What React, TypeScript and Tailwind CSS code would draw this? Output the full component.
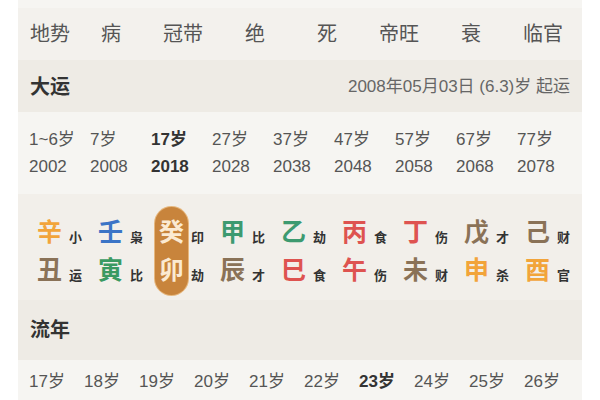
const font = { fontFamily: '"Liberation Sans", "Noto Sans CJK SC", sans-serif' };

const dishi = ["病", "冠带", "绝", "死", "帝旺", "衰", "临官"];

const dayun = [
  ["1~6岁", "2002"],
  ["7岁", "2008"],
  ["17岁", "2018"],
  ["27岁", "2028"],
  ["37岁", "2038"],
  ["47岁", "2048"],
  ["57岁", "2058"],
  ["67岁", "2068"],
  ["77岁", "2078"],
];

type Pillar = {
  gan: string;
  ganColor: string;
  ganTag: string;
  zhi: string;
  zhiColor: string;
  zhiTag: string;
  active?: boolean;
};

const pillars: Pillar[] = [
  { gan: "辛", ganColor: "text-[#f2a43a]", ganTag: "小", zhi: "丑", zhiColor: "text-[#8a7257]", zhiTag: "运" },
  { gan: "壬", ganColor: "text-[#3b74c6]", ganTag: "枭", zhi: "寅", zhiColor: "text-[#3a9a62]", zhiTag: "比" },
  { gan: "癸", ganColor: "", ganTag: "印", zhi: "卯", zhiColor: "", zhiTag: "劫", active: true },
  { gan: "甲", ganColor: "text-[#3d9a70]", ganTag: "比", zhi: "辰", zhiColor: "text-[#8a7257]", zhiTag: "才" },
  { gan: "乙", ganColor: "text-[#3d9a70]", ganTag: "劫", zhi: "巳", zhiColor: "text-[#de5350]", zhiTag: "食" },
  { gan: "丙", ganColor: "text-[#de5350]", ganTag: "食", zhi: "午", zhiColor: "text-[#de5350]", zhiTag: "伤" },
  { gan: "丁", ganColor: "text-[#de5350]", ganTag: "伤", zhi: "未", zhiColor: "text-[#8a7257]", zhiTag: "财" },
  { gan: "戊", ganColor: "text-[#8a7257]", ganTag: "才", zhi: "申", zhiColor: "text-[#f2a43a]", zhiTag: "杀" },
  { gan: "己", ganColor: "text-[#8a7257]", ganTag: "财", zhi: "酉", zhiColor: "text-[#f2a43a]", zhiTag: "官" },
];

const liunian = Array.from({ length: 10 }, (_, i) => [`${17 + i}岁`, `${2018 + i}`]);

function PillarCol({ p }: { p: Pillar }) {
  return (
    <div className="flex items-center">
      <div
        className={
          p.active
            ? "flex flex-col rounded-full bg-[#c8843c] px-[4px] py-[6px] text-[#fbead2] ring-1 ring-[#e6b77e]"
            : "flex flex-col px-[4px] py-[6px]"
        }
      >
        <span className={`h-[38px] text-[25px] font-bold leading-[38px] ${p.ganColor}`}>{p.gan}</span>
        <span className={`h-[38px] text-[25px] font-bold leading-[38px] ${p.zhiColor}`}>{p.zhi}</span>
      </div>
      <div className="ml-[3px] flex flex-col py-[6px] text-[13px] font-bold text-[#333]">
        <span className="flex h-[38px] items-end pb-[6px] leading-[14px]">{p.ganTag}</span>
        <span className="flex h-[38px] items-end pb-[6px] leading-[14px]">{p.zhiTag}</span>
      </div>
    </div>
  );
}

export default function App() {
  return (
    <div className="h-screen overflow-hidden bg-white px-[18px]" style={font}>
      <div className="bg-[#f3f1ed]">
        <div className="h-2 bg-[#f6f5f2]" />

        <div className="flex h-[52px] items-center pl-3 text-[20px] text-[#555]">
          <span className="w-[45px]">地势</span>
          <div className="grid grid-cols-[repeat(7,72px)]">
            {dishi.map((d) => (
              <span key={d} className="text-center">
                {d}
              </span>
            ))}
          </div>
        </div>

        <div className="flex h-[52px] items-center justify-between bg-[#eeebe5] pl-3 pr-[12px] pt-[2px]">
          <span className="text-[20px] font-bold text-[#333]">大运</span>
          <span className="text-[17px] text-[#666]">2008年05月03日 (6.3)岁 起运</span>
        </div>

        <div className="grid h-[82px] grid-cols-[repeat(9,61px)] bg-[#f6f5f2] pl-[11px] pt-[14px] text-[17px] leading-[27px] text-[#555]">
          {dayun.map(([age, year]) => (
            <div key={year} className={year === "2018" ? "flex flex-col font-bold text-[#333]" : "flex flex-col"}>
              <span>{age}</span>
              <span>{year}</span>
            </div>
          ))}
        </div>

        <div className="grid h-[106px] grid-cols-[repeat(9,61px)] bg-[#f2efea] pl-[15px] pt-[8px]">
          {pillars.map((p) => (
            <PillarCol key={p.gan} p={p} />
          ))}
        </div>

        <div className="flex h-[60px] items-center bg-[#eeebe5] pl-3">
          <span className="text-[20px] font-bold text-[#333]">流年</span>
        </div>

        <div className="grid grid-cols-[repeat(10,55px)] bg-[#f6f5f2] pl-[11px] pt-[8px] text-[17px] leading-[27px] text-[#555]">
          {liunian.map(([age, year]) => (
            <div key={year} className={year === "2024" ? "flex flex-col font-bold text-[#333]" : "flex flex-col"}>
              <span>{age}</span>
              <span>{year}</span>
            </div>
          ))}
        </div>
      </div>
    </div>
  );
}
